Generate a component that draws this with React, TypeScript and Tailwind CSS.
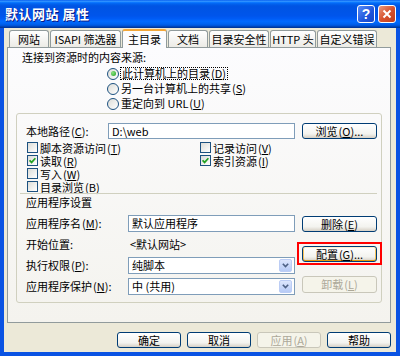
import type { ReactNode } from 'react';

const tabs = [
  { label: '网站', w: 'w-[40px]' },
  { label: 'ISAPI 筛选器', w: 'w-[71px]' },
  { label: '主目录', w: 'w-[45px]', active: true },
  { label: '文档', w: 'w-[40px]' },
  { label: '目录安全性', w: 'w-[60px]' },
  { label: 'HTTP 头', w: 'w-[46px]' },
  { label: '自定义错误', w: 'w-[60px]' },
];

function Key({ k }: { k: string }) {
  return (
    <span className="ml-[1px]">
      (<span className="underline underline-offset-[1px]">{k}</span>)
    </span>
  );
}

function Btn({
  children,
  w = 'w-[75px]',
  h = 'h-[16px]',
  disabled = false,
  focus = false,
}: {
  children: ReactNode;
  w?: string;
  h?: string;
  disabled?: boolean;
  focus?: boolean;
}) {
  if (disabled) {
    return (
      <div className={`${w} ${h} shrink-0 rounded-[3px] border border-[#C9C7BA] bg-[#F5F4EA] text-[#ACA899] flex items-center justify-center leading-none`}>
        {children}
      </div>
    );
  }
  return (
    <div
      className={`${w} ${h} shrink-0 rounded-[3px] border border-[#003C74] bg-[linear-gradient(to_bottom,#FFFFFF,#F3F3EF_70%,#D6D0C5)] flex items-center justify-center leading-none ${
        focus ? 'shadow-[inset_0_1px_0_#FFF0CF,inset_0_-1px_0_#E5970B,inset_1px_0_0_#F8C35A,inset_-1px_0_0_#F8C35A]' : ''
      }`}
    >
      {children}
    </div>
  );
}

function Check({ on = false }: { on?: boolean }) {
  return (
    <span className="w-[11px] h-[11px] shrink-0 border border-[#1C5180] bg-[linear-gradient(135deg,#DCDCD7,#FFFFFF)] flex items-center justify-center">
      {on && (
        <svg width="7" height="7" viewBox="0 0 7 7">
          <path d="M0.6 3.3 L2.6 5.4 L6.4 1.2" stroke="#21A121" strokeWidth="1.7" fill="none" />
        </svg>
      )}
    </span>
  );
}

function Radio({ on = false }: { on?: boolean }) {
  return (
    <span className="w-[12px] h-[12px] shrink-0 rounded-full border border-[#1C5180] bg-[linear-gradient(135deg,#DCDCD7,#FFFFFF)] flex items-center justify-center">
      {on && <span className="w-[5px] h-[5px] rounded-full bg-[radial-gradient(circle_at_35%_35%,#8BE27F,#21A121)]" />}
    </span>
  );
}

function Select({ value }: { value: string }) {
  return (
    <div className="w-[167px] h-[17px] border border-[#7F9DB9] bg-white flex items-center">
      <span className="flex-1 pl-[3px] leading-none">{value}</span>
      <span className="w-[13px] h-[13px] mr-[2px] rounded-[2px] bg-[linear-gradient(to_bottom,#DCE6FD,#B7CBF6)] border border-[#BCCDF5] flex items-center justify-center">
        <svg width="7" height="5" viewBox="0 0 7 5">
          <path d="M0.8 0.8 L3.5 3.6 L6.2 0.8" stroke="#4D6185" strokeWidth="1.6" fill="none" />
        </svg>
      </span>
    </div>
  );
}

function CheckRow({ on = false, children }: { on?: boolean; children: ReactNode }) {
  return (
    <div className="h-[13px] flex items-center gap-[2px] leading-[12px]">
      <Check on={on} />
      <span>{children}</span>
    </div>
  );
}

export default function App() {
  return (
    <div className="w-[400px] h-[356px] flex flex-col bg-[#0A53E3] text-[11px] leading-[13px] text-black font-['Noto_Sans_CJK_SC','Noto_Sans',sans-serif]">
      {/* Title bar */}
      <div className="h-[28px] shrink-0 flex items-center pl-[5px] pr-[4px] bg-[linear-gradient(to_bottom,#0058EE_0%,#3593FF_4%,#288EFF_6%,#127DFF_8%,#036FFC_10%,#0262EE_14%,#0057E5_20%,#0054E3_24%,#0055EB_56%,#005BF5_66%,#026AFE_76%,#0062EF_86%,#0052D6_92%,#0040AB_96%,#003092_100%)]">
        <span className="flex-1 text-white font-bold text-[13px] leading-[16px] tracking-[0.5px] [text-shadow:1px_1px_#0A1883]">默认网站 属性</span>
        <div className="flex gap-[3px] mb-[1px]">
          <div className="w-[18px] h-[18px] rounded-[3px] border border-white bg-[linear-gradient(135deg,#5A8DF8,#1F55DB_60%,#1A47C4)] flex items-center justify-center text-white font-bold text-[14px] leading-none font-['Liberation_Sans',sans-serif]">
            ?
          </div>
          <div className="w-[18px] h-[18px] rounded-[3px] border border-white bg-[linear-gradient(135deg,#E99A7F,#D8532F_50%,#C23D1C)] flex items-center justify-center">
            <svg width="10" height="10" viewBox="0 0 10 10">
              <path d="M1.5 1.5 L8.5 8.5 M8.5 1.5 L1.5 8.5" stroke="white" strokeWidth="2" />
            </svg>
          </div>
        </div>
      </div>

      {/* Body */}
      <div className="flex-1 mx-[4px] mb-[4px] bg-[#ECE9D8] flex flex-col pl-[3px]">
        {/* Tabs */}
        <div className="mt-[1px] h-[19px] -mb-px pl-[2px] flex items-end gap-[1px] relative z-10">
          {tabs.map((t) =>
            t.active ? (
              <div
                key={t.label}
                className={`${t.w} h-[19px] rounded-t-[3px] border-x border-[#919B9C] border-t-2 border-t-[#F2A73A] bg-[#FCFCFE] flex items-center justify-center leading-none`}
              >
                {t.label}
              </div>
            ) : (
              <div
                key={t.label}
                className={`${t.w} h-[17px] mb-px rounded-t-[3px] border-x border-t border-[#919B9C] bg-[linear-gradient(to_bottom,#FFFFFF,#ECEBE6)] flex items-center justify-center leading-none`}
              >
                {t.label}
              </div>
            ),
          )}
        </div>

        {/* Tab panel */}
        <div className="w-[384px] h-[276px] border border-[#919B9C] bg-[linear-gradient(to_bottom,#FCFCFE,#F4F3EE)] flex flex-col">
          <div className="mt-[2px] ml-[14px] h-[14px] leading-[14px]">连接到资源时的内容来源:</div>

          <div className="mt-[2px] ml-[99px] flex flex-col">
            <div className="h-[15px] flex items-center gap-[1px]">
              <Radio on />
              <span className="border border-dotted border-black px-[1px] leading-[11px]">
                此计算机上的目录<Key k="D" />
              </span>
            </div>
            <div className="h-[15px] flex items-center gap-[2px]">
              <Radio />
              <span>
                另一台计算机上的共享<Key k="S" />
              </span>
            </div>
            <div className="h-[15px] flex items-center gap-[2px]">
              <Radio />
              <span>
                重定向到 URL<Key k="U" />
              </span>
            </div>
          </div>

          {/* Group box */}
          <div className="mt-[2px] ml-[8px] w-[366px] h-[190px] border border-[#D0D0BF] rounded-[3px] flex flex-col">
            <div className="mt-[9px] h-[16px] flex items-center">
              <span className="ml-[9px] w-[82px]">
                本地路径<Key k="C" />:
              </span>
              <div className="w-[187px] h-[16px] border border-[#7F9DB9] bg-white flex items-center pl-[3px] leading-none">D:\web</div>
              <div className="ml-[7px]">
                <Btn>
                  浏览<Key k="O" />...
                </Btn>
              </div>
            </div>

            <div className="mt-[2px] ml-[10px] flex">
              <div className="w-[173px] flex flex-col">
                <CheckRow>
                  脚本资源访问<Key k="T" />
                </CheckRow>
                <CheckRow on>
                  读取<Key k="R" />
                </CheckRow>
                <CheckRow>
                  写入<Key k="W" />
                </CheckRow>
                <CheckRow>
                  目录浏览<Key k="B" />
                </CheckRow>
              </div>
              <div className="flex flex-col">
                <CheckRow>
                  记录访问<Key k="V" />
                </CheckRow>
                <CheckRow on>
                  索引资源<Key k="I" />
                </CheckRow>
              </div>
            </div>

            <div className="ml-[3px] w-[357px] h-px bg-[#D0D0BF]" />
            <div className="mt-[1px] ml-[9px] h-[14px] leading-[14px]">应用程序设置</div>

            <div className="mt-[6px] flex">
              <div className="ml-[9px] flex flex-col gap-[4px]">
                <div className="h-[17px] flex items-center">
                  <span className="w-[102px]">
                    应用程序名<Key k="M" />:
                  </span>
                  <div className="w-[167px] h-[17px] border border-[#7F9DB9] bg-white flex items-center pl-[3px] leading-none">默认应用程序</div>
                </div>
                <div className="h-[17px] flex items-center">
                  <span className="w-[102px]">开始位置:</span>
                  <span className="pl-[2px]">&lt;默认网站&gt;</span>
                </div>
                <div className="h-[17px] flex items-center">
                  <span className="w-[102px]">
                    执行权限<Key k="P" />:
                  </span>
                  <Select value="纯脚本" />
                </div>
                <div className="h-[17px] flex items-center">
                  <span className="w-[102px]">
                    应用程序保护<Key k="N" />:
                  </span>
                  <Select value="中 (共用)" />
                </div>
              </div>

              <div className="ml-[7px] w-[75px] flex flex-col">
                <div className="mt-[1px]">
                  <Btn>
                    删除<Key k="E" />
                  </Btn>
                </div>
                <div className="mt-[10px] -mx-[5px] border-2 border-[#FF0000] px-[3px] pt-[2px] pb-[1px]">
                  <Btn focus>
                    配置<Key k="G" />...
                  </Btn>
                </div>
                <div className="mt-[11px]">
                  <Btn disabled h="h-[17px]">
                    卸载<Key k="L" />
                  </Btn>
                </div>
              </div>
            </div>
          </div>
        </div>

        {/* Dialog buttons */}
        <div className="mt-[9px] pr-[5px] flex justify-end gap-[6px]">
          <Btn w="w-[64px]">确定</Btn>
          <Btn w="w-[64px]">取消</Btn>
          <Btn w="w-[64px]" disabled>
            应用<Key k="A" />
          </Btn>
          <Btn w="w-[64px]">帮助</Btn>
        </div>
      </div>
    </div>
  );
}
